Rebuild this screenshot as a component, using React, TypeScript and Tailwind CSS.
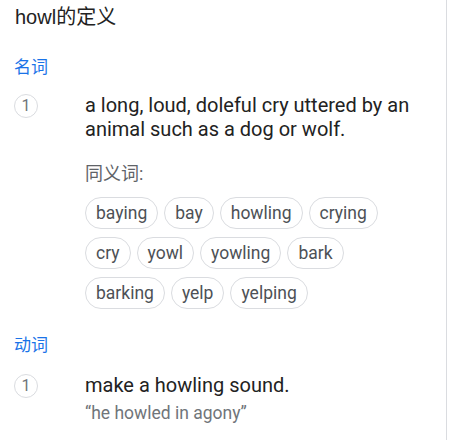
import React from "react";

const synonyms = [
  ["baying", "bay", "howling", "crying"],
  ["cry", "yowl", "yowling", "bark"],
  ["barking", "yelp", "yelping"],
];

const roboto = { fontFamily: "Roboto, 'Noto Sans CJK SC', sans-serif" };

// Numbered sense marker
const SenseNumber: React.FC = () => (
  <div className="w-[71px] shrink-0">
    <div className="mt-[1px] flex h-6 w-6 items-center justify-center rounded-full border border-[#dadce0] text-[16px] text-[#70757a]">
      1
    </div>
  </div>
);

const App: React.FC = () => {
  return (
    <main
      className="h-[440px] w-[447px] border-r border-[#dadce0] bg-white pl-[14px] pt-[5px]"
      style={roboto}
    >
      {/* Title */}
      <h1
        className="pl-[1px] text-[20px] leading-6 text-[#222]"
        style={{ fontFamily: "'Liberation Sans', 'Noto Sans CJK SC', sans-serif" }}
      >
        howl的定义
      </h1>

      {/* Noun */}
      <div className="mt-[26px] text-[17px] leading-6 text-[#1a73e8]">名词</div>
      <div className="mt-[14px] flex">
        <SenseNumber />
        <div className="flex-1 pr-3">
          <p className="text-[20px] leading-6 text-[#222]">
            a long, loud, doleful cry uttered by an animal such as a dog or wolf.
          </p>
          <div className="mt-[21px] text-[18px] leading-6 text-[#5f6368]">同义词:</div>
          <div className="mt-[11px] flex flex-col gap-2">
            {synonyms.map((row, i) => (
              <div key={i} className="flex gap-[6px]">
                {row.map((w) => (
                  <span
                    key={w}
                    className="flex h-8 items-center rounded-full border border-[#dadce0] px-[10px] text-[17.5px] text-[#4d5156]"
                  >
                    {w}
                  </span>
                ))}
              </div>
            ))}
          </div>
        </div>
      </div>

      {/* Verb */}
      <div className="mt-6 text-[17px] leading-6 text-[#1a73e8]">动词</div>
      <div className="mt-4 flex">
        <SenseNumber />
        <div className="flex-1 pr-3">
          <p className="text-[20px] leading-6 text-[#222]">make a howling sound.</p>
          <p className="mt-[4px] text-[17.5px] leading-6 text-[#70757a]">“he howled in agony”</p>
        </div>
      </div>
    </main>
  );
};

export default App;
